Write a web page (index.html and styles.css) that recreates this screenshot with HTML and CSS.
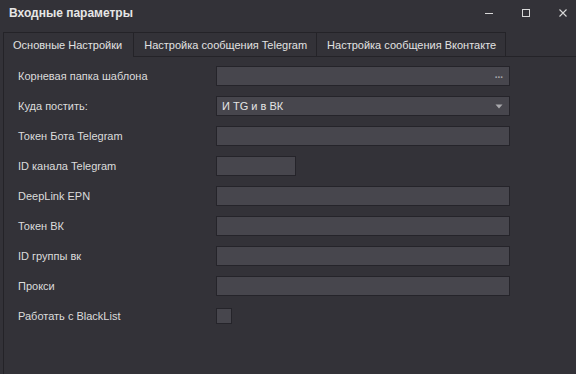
FILE: index.html
```html
<!DOCTYPE html>
<html lang="ru">
<head>
    <meta charset="UTF-8">
    <meta name="viewport" content="width=device-width, initial-scale=1.0">
    <title>Входные параметры</title>
    <link rel="stylesheet" href="styles.css">
</head>
<body>
    <div class="window">
        <!-- Title bar -->
        <div class="titlebar">
            <span class="title">Входные параметры</span>
            <div class="controls">
                <span class="ctl">
                    <svg width="10" height="10" viewBox="0 0 10 10"><path d="M1 5.5H9" stroke="#d8d8d8" stroke-width="1"/></svg>
                </span>
                <span class="ctl">
                    <svg width="10" height="10" viewBox="0 0 10 10"><rect x="1.5" y="1.5" width="7" height="7" fill="none" stroke="#d8d8d8" stroke-width="1"/></svg>
                </span>
                <span class="ctl">
                    <svg width="10" height="10" viewBox="0 0 10 10"><path d="M1.5 1.5L8.5 8.5M8.5 1.5L1.5 8.5" stroke="#d8d8d8" stroke-width="1.1"/></svg>
                </span>
            </div>
        </div>

        <!-- Tabs -->
        <div class="tabs">
            <div class="tab active">Основные Настройки</div>
            <div class="tab">Настройка сообщения Telegram</div>
            <div class="tab">Настройка сообщения Вконтакте</div>
            <div class="tab-rest"></div>
        </div>

        <!-- Main settings -->
        <div class="panel">
            <div class="form">
                <label>Корневая папка шаблона</label>
                <div class="field wide browse"><span class="dots">...</span></div>

                <label>Куда постить:</label>
                <div class="field wide combo">
                    <span>И TG и в ВК</span>
                    <svg width="8" height="5" viewBox="0 0 8 5"><path d="M0.5 0.5H7.5L4 4.5Z" fill="#a9a9ad"/></svg>
                </div>

                <label>Токен Бота Telegram</label>
                <div class="field wide"></div>

                <label>ID канала Telegram</label>
                <div class="field short"></div>

                <label>DeepLink EPN</label>
                <div class="field wide"></div>

                <label>Токен ВК</label>
                <div class="field wide"></div>

                <label>ID группы вк</label>
                <div class="field wide"></div>

                <label>Прокси</label>
                <div class="field wide"></div>

                <label>Работать с BlackList</label>
                <div class="check-cell"><span class="checkbox"></span></div>
            </div>
        </div>
    </div>
</body>
</html>
```

FILE: styles.css
```css
/* General Styling */
body {
    margin: 0;
    padding: 0;
    background: #333238;
    font-family: 'Liberation Sans', Arial, sans-serif;
    color: #dedede;
    width: 576px;
    height: 374px;
    overflow: hidden;
}

.window {
    display: flex;
    flex-direction: column;
    height: 374px;
}

/* Title Bar */
.titlebar {
    height: 25px;
    display: flex;
    align-items: center;
    justify-content: space-between;
    padding-left: 9px;
}

.title {
    font-size: 12px;
    font-weight: bold;
    color: #e6e6e6;
}

.controls {
    display: flex;
    align-items: center;
    gap: 27px;
    padding-right: 8px;
}

.ctl {
    width: 10px;
    height: 10px;
    display: flex;
}

/* Tabs */
.tabs {
    display: flex;
    margin-top: 7px;
    padding-left: 3px;
    height: 25px;
}

.tab {
    box-sizing: border-box;
    height: 25px;
    padding: 0 9px 0 10px;
    display: flex;
    align-items: center;
    font-size: 11px;
    color: #e2e2e2;
    border: 1px solid #242328;
    border-left: none;
    border-bottom: none;
    box-shadow: inset 0 -1px 0 #242328;
}

.tab.active {
    border-left: 1px solid #242328;
    box-shadow: none;
    padding: 0 11px 0 9px;
}

.tab-rest {
    flex: 1;
    box-shadow: inset 0 -1px 0 #242328;
}

/* Panel */
.panel {
    flex: 1;
    margin-left: 3px;
    border-left: 1px solid #242328;
    padding: 9px 0 0 14px;
}

.form {
    display: grid;
    grid-template-columns: 198px auto;
    row-gap: 10px;
    align-items: center;
}

.form label {
    font-size: 11px;
    color: #dcdcdc;
    line-height: 20px;
}

.field {
    box-sizing: border-box;
    height: 20px;
    background: #47464d;
    border: 1px solid #25242a;
    display: flex;
    align-items: center;
    justify-content: space-between;
    padding: 0 6px 0 5px;
    font-size: 11px;
    color: #e4e4e4;
}

.field.wide {
    width: 294px;
}

.field.short {
    width: 80px;
}

.dots {
    margin-left: auto;
    margin-top: -4px;
    color: #a8a8ac;
    font-size: 10px;
    font-weight: bold;
}

.check-cell {
    height: 20px;
    display: flex;
    align-items: center;
}

.checkbox {
    box-sizing: border-box;
    width: 16px;
    height: 16px;
    background: #47464d;
    border: 1px solid #25242a;
}
```
